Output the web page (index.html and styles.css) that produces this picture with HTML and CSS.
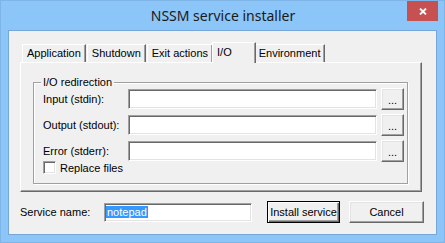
FILE: index.html
```html
<!DOCTYPE html>
<html lang="en">
<head>
    <meta charset="UTF-8">
    <title>NSSM service installer</title>
    <link rel="stylesheet" href="styles.css">
</head>
<body>

    <div class="window">
        <div class="titlebar">
            <div class="title">NSSM service installer</div>
            <div class="close">
                <svg width="8" height="7" viewBox="0 0 8 7">
                    <path d="M1 0.5 L7 6.5 M7 0.5 L1 6.5" stroke="#fff" stroke-width="1.8" fill="none"/>
                </svg>
            </div>
        </div>

        <div class="client">
            <div class="tabs">
                <div class="tab-row">
                    <div class="tab">Application</div>
                    <div class="tab">Shutdown</div>
                    <div class="tab">Exit actions</div>
                    <div class="tab selected">I/O</div>
                    <div class="tab">Environment</div>
                </div>

                <div class="tab-panel">
                    <fieldset class="group">
                        <legend>I/O redirection</legend>
                        <div class="io-grid">
                            <div class="label">Input (stdin):</div>
                            <div class="edit"></div>
                            <div class="btn browse">...</div>

                            <div class="label">Output (stdout):</div>
                            <div class="edit"></div>
                            <div class="btn browse">...</div>

                            <div class="label">Error (stderr):</div>
                            <div class="edit"></div>
                            <div class="btn browse">...</div>
                        </div>
                        <div class="check">
                            <span class="box"></span>
                            <span>Replace files</span>
                        </div>
                    </fieldset>
                </div>
            </div>

            <div class="bottom-row">
                <div class="label service-label">Service name:</div>
                <div class="edit service-edit"><span class="selection">notepad</span></div>
                <div class="btn default install">Install service</div>
                <div class="btn cancel">Cancel</div>
            </div>
        </div>
    </div>

</body>
</html>
```

FILE: styles.css
```css
body {
    margin: 0;
    font-family: "Liberation Sans", Arial, sans-serif;
    font-size: 11px;
    color: #000;
}
.window {
    width: 445px;
    height: 243px;
    box-sizing: border-box;
    background-color: #8cc5f7;
    border: 1px solid #7fb4e6;
    display: flex;
    flex-direction: column;
}
.titlebar {
    height: 29px;
    display: grid;
    grid-template-columns: 1fr auto 1fr;
    padding: 0 6px 0 7px;
}
.title {
    grid-column: 2;
    font-family: "Noto Sans", "Open Sans", sans-serif;
    font-size: 14px;
    line-height: 29px;
    color: #1a1a1a;
}
.close {
    grid-column: 3;
    justify-self: end;
    width: 31px;
    height: 20px;
    background-color: #c75050;
    display: flex;
    justify-content: center;
    align-items: center;
}
.client {
    flex: 1;
    margin: 0 7px 7px 7px;
    background-color: #f0f0f0;
    border: 1px solid #76a7d8;
    padding: 11px 12px 0 11px;
}

/* tab control */
.tabs {
    width: 402px;
}
.tab-row {
    display: flex;
    align-items: flex-end;
    padding-left: 2px;
    height: 20px;
}
.tab {
    height: 17px;
    line-height: 17px;
    padding: 0 4px;
    margin-right: 1px;
    border-top: 1px solid #fff;
    border-left: 1px solid #fff;
    border-right: 1px solid #696969;
    box-shadow: inset -1px 0 0 #a0a0a0;
    background-color: #f0f0f0;
}
.tab.selected {
    height: 18px;
    line-height: 18px;
    padding: 0 23px 2px 4px;
    margin: 0 -2px -1px -2px;
    position: relative;
    z-index: 1;
}
.tab-panel {
    border: 1px solid;
    border-color: #fff #696969 #696969 #fff;
    box-shadow: inset -1px -1px 0 #a0a0a0;
    padding: 13px 13px 7px 12px;
}

/* group box */
.group {
    margin: 0;
    border: 1px solid #a0a0a0;
    box-shadow: inset 1px 1px 0 #fff, 1px 1px 0 #fff;
    padding: 0 3px 9px 9px;
}
.group legend {
    padding: 0 2px;
    margin-left: -2px;
    line-height: 12px;
    background-color: #f0f0f0;
}
.io-grid {
    display: grid;
    grid-template-columns: 81px 1fr 23px;
    grid-auto-rows: 22px;
    gap: 4px;
    align-items: center;
}
.edit {
    height: 16px;
    background-color: #fff;
    border: 1px solid;
    border-color: #a0a0a0 #fff #fff #a0a0a0;
    box-shadow: inset 1px 1px 0 #696969, inset -1px -1px 0 #e3e3e3;
    padding: 1px 2px 1px 2px;
}
.btn {
    box-sizing: border-box;
    height: 22px;
    border: 1px solid;
    border-color: #fff #696969 #696969 #fff;
    box-shadow: inset -1px -1px 0 #a0a0a0, inset 1px 1px 0 #e3e3e3;
    background-color: #f0f0f0;
    display: flex;
    justify-content: center;
    align-items: center;
}
.browse {
    padding-top: 2px;
}
.check {
    display: flex;
    align-items: center;
    gap: 4px;
    margin-top: -1px;
    height: 13px;
}
.box {
    width: 9px;
    height: 9px;
    background-color: #fff;
    border: 1px solid;
    border-color: #a0a0a0 #fff #fff #a0a0a0;
    box-shadow: inset 1px 1px 0 #696969, inset -1px -1px 0 #e3e3e3;
    padding: 1px;
}

/* bottom row */
.bottom-row {
    display: flex;
    align-items: center;
    height: 22px;
    margin-top: 9px;
    gap: 9px;
}
.service-label {
    width: 84px;
    margin-right: -9px;
}
.service-edit {
    width: 143px;
    height: 15px;
    line-height: 15px;
    padding: 1px 2px 1px 1px;
}
.selection {
    background-color: #3399ff;
    color: #fff;
    border-right: 1px solid #d07000;
    padding-left: 1px;
}
.install {
    margin-left: auto;
    width: 73px;
}
.default {
    border-color: #000;
    box-shadow: inset 1px 1px 0 #fff, inset -1px -1px 0 #696969, inset -2px -2px 0 #a0a0a0;
}
.cancel {
    width: 75px;
}
```
